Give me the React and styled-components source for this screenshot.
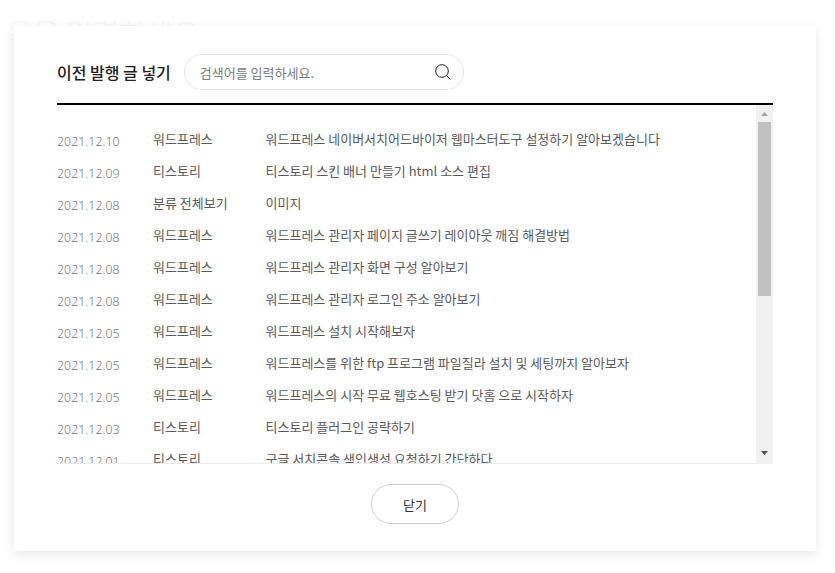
import styled, { createGlobalStyle } from "styled-components";

const posts = [
	["2021.12.10", "워드프레스", "워드프레스 네이버서치어드바이저 웹마스터도구 설정하기 알아보겠습니다"],
	["2021.12.09", "티스토리", "티스토리 스킨 배너 만들기 html 소스 편집"],
	["2021.12.08", "분류 전체보기", "이미지"],
	["2021.12.08", "워드프레스", "워드프레스 관리자 페이지 글쓰기 레이아웃 깨짐 해결방법"],
	["2021.12.08", "워드프레스", "워드프레스 관리자 화면 구성 알아보기"],
	["2021.12.08", "워드프레스", "워드프레스 관리자 로그인 주소 알아보기"],
	["2021.12.05", "워드프레스", "워드프레스 설치 시작해보자"],
	["2021.12.05", "워드프레스", "워드프레스를 위한 ftp 프로그램 파일질라 설치 및 세팅까지 알아보자"],
	["2021.12.05", "워드프레스", "워드프레스의 시작 무료 웹호스팅 받기 닷홈 으로 시작하자"],
	["2021.12.03", "티스토리", "티스토리 플러그인 공략하기"],
	["2021.12.01", "티스토리", "구글 서치콘솔 색인생성 요청하기 간단하다"],
];

const GlobalStyle = createGlobalStyle`
	html, body {
		margin: 0;
		height: 100%;
		background: #fff;
		overflow: hidden;
	}
	body {
		font-family: "Noto Sans", "Noto Sans CJK KR", sans-serif;
	}
`;

const Page = styled.div`
	position: relative;
	width: 835px;
	height: 573px;
	padding: 26px 19px 22px 14px;
	box-sizing: border-box;
	overflow: hidden;
	opacity: 0.999;
`;

const GhostTitle = styled.div`
	position: absolute;
	left: 6px;
	top: 11px;
	font-family: "Noto Sans CJK KR", sans-serif;
	font-size: 29px;
	font-weight: 300;
	color: #f7f7f7;
`;

const Modal = styled.section`
	position: relative;
	height: 525px;
	box-sizing: border-box;
	padding: 28px 43px 0;
	background: #fff;
	border-radius: 3px;
	box-shadow: 0 3px 12px rgba(0, 0, 0, 0.1);
`;

const Header = styled.header`
	display: flex;
	align-items: center;
	gap: 13px;
	height: 51px;
	box-sizing: border-box;
	border-bottom: 2px solid #000;
`;

const Title = styled.h2`
	margin: 0 0 13px;
	font-family: "Noto Sans CJK KR", sans-serif;
	font-size: 16px;
	font-weight: 500;
	color: #222;
`;

const SearchBox = styled.div`
	display: flex;
	align-items: center;
	justify-content: space-between;
	width: 280px;
	height: 36px;
	margin-bottom: 13px;
	padding: 0 11px 0 15px;
	box-sizing: border-box;
	border: 1px solid #e6e6e6;
	border-radius: 18px;
`;

const SearchText = styled.span`
	font-family: "Noto Sans CJK KR", sans-serif;
	font-size: 13px;
	font-weight: 400;
	color: #7c7c7c;
`;

const ListArea = styled.div`
	display: flex;
	height: 359px;
	box-sizing: border-box;
	border-bottom: 1px solid #ebebeb;
`;

const ListViewport = styled.div`
	flex: 1;
	overflow: hidden;
`;

const List = styled.ul`
	margin: 0;
	padding: 17px 0 0;
	list-style: none;
`;

const Row = styled.li`
	display: grid;
	grid-template-columns: 96px 112.5px 1fr;
	height: 32px;
	align-items: center;
	font-family: "Noto Sans CJK KR", sans-serif;
	font-size: 13px;
	font-weight: 400;
	color: #5a5a5a;
`;

const PostDate = styled.span`
	font-family: "Noto Sans", sans-serif;
	font-size: 12.4px;
	font-weight: 300;
	color: #777;
	padding-top: 7px;
`;

const Category = styled.span`
	white-space: nowrap;
`;

const PostTitle = styled.span`
	white-space: nowrap;
`;

const Scrollbar = styled.div`
	display: flex;
	flex-direction: column;
	justify-content: space-between;
	width: 17px;
	margin-bottom: -1px;
	background: #f1f1f1;
`;

const ScrollArrow = styled.div`
	display: flex;
	align-items: center;
	justify-content: center;
	height: 17px;
	padding-bottom: ${(props) => (props.$down ? "3px" : "0")};
`;

const ScrollThumb = styled.div`
	width: 13px;
	height: 174px;
	margin: 0 2px auto;
	background: #c1c1c1;
`;

const Footer = styled.div`
	display: flex;
	justify-content: center;
	padding-top: 20px;
`;

const CloseButton = styled.button`
	width: 88px;
	height: 40px;
	padding: 0;
	background: none;
	border: 1px solid #d0d0d0;
	border-radius: 20px;
	font-family: "Noto Sans CJK KR", sans-serif;
	font-size: 13px;
	font-weight: 400;
	color: #333;
`;

const App = () => {
	return (
		<Page>
			<GlobalStyle />
			<GhostTitle>목을 입력하세요</GhostTitle>
			<Modal>
				<Header>
					<Title>이전 발행 글 넣기</Title>
					<SearchBox>
						<SearchText>검색어를 입력하세요.</SearchText>
						<svg width="18" height="18" viewBox="0 0 18 18" fill="none" stroke="#222" strokeWidth="1">
							<circle cx="8" cy="8" r="6.3" />
							<path d="M12.6 12.6L16.5 16.5" />
						</svg>
					</SearchBox>
				</Header>
				<ListArea>
					<ListViewport>
						<List>
							{posts.map((post, index) => (
								<Row key={index}>
									<PostDate>{post[0]}</PostDate>
									<Category>{post[1]}</Category>
									<PostTitle>{post[2]}</PostTitle>
								</Row>
							))}
						</List>
					</ListViewport>
					<Scrollbar>
						<ScrollArrow>
							<svg width="7" height="4" viewBox="0 0 7 4">
								<path d="M3.5 0L7 4H0z" fill="#a3a3a3" />
							</svg>
						</ScrollArrow>
						<ScrollThumb />
						<ScrollArrow $down>
							<svg width="7" height="4" viewBox="0 0 7 4">
								<path d="M0 0H7L3.5 4z" fill="#505050" />
							</svg>
						</ScrollArrow>
					</Scrollbar>
				</ListArea>
				<Footer>
					<CloseButton>닫기</CloseButton>
				</Footer>
			</Modal>
		</Page>
	);
};

export default App;
